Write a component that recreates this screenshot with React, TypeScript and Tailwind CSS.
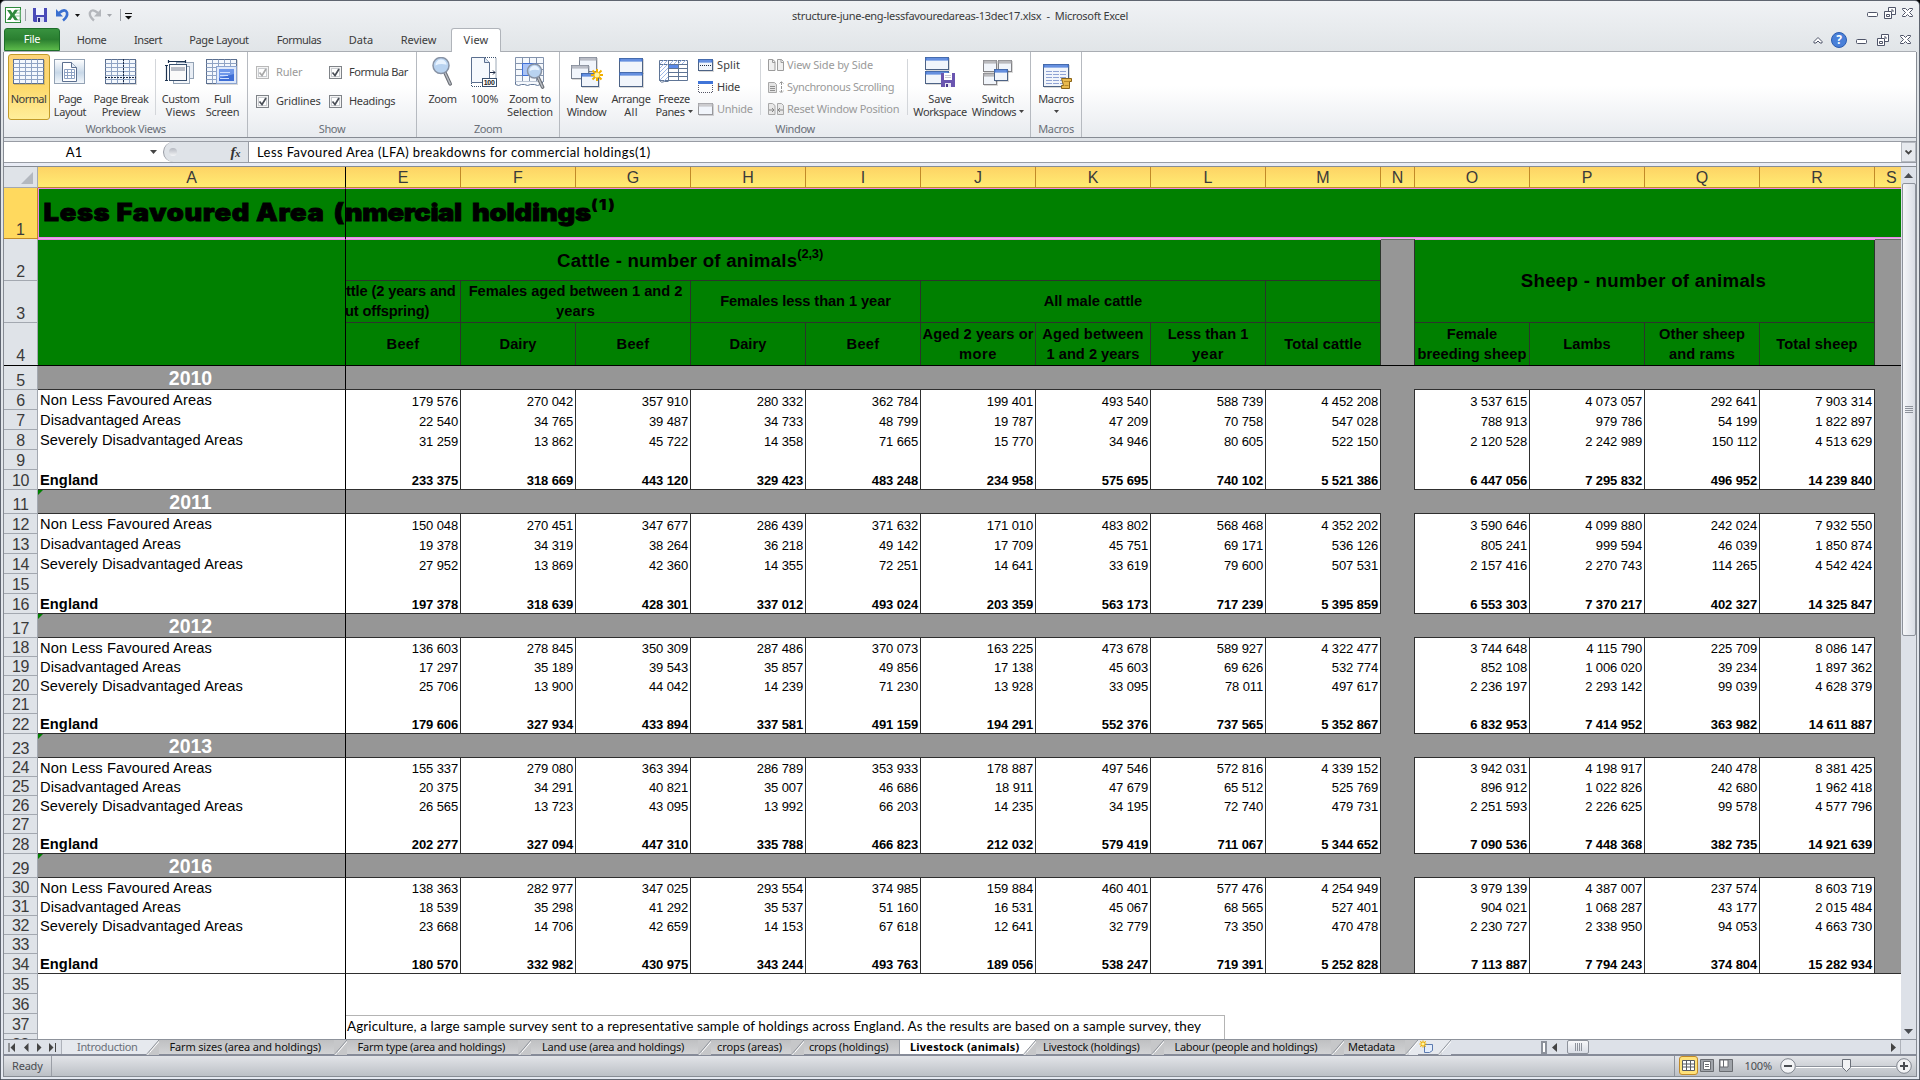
import React, { useLayoutEffect, useRef, useState } from "react";

/* Text tracked so that it fills a given width. */
function Fit({ w, children, className = "" }: { w: number; children: string; className?: string }) {
  const ref = useRef<HTMLSpanElement>(null);
  const [ls, setLs] = useState(0);
  useLayoutEffect(() => {
    if (ref.current) {
      const natural = ref.current.offsetWidth;
      setLs((w + 1 - natural) / children.length);
    }
  }, []);
  return (
    <span ref={ref} className={`inline-block whitespace-pre ${className}`} style={{ letterSpacing: `${ls}px` }}>
      {children}
    </span>
  );
}

/* ---------- icons ---------- */
type K = { children: React.ReactNode; w?: number; h?: number; className?: string };
const Svg = ({ children, w = 32, h = 32, className = "" }: K) => (
  <svg width={w} height={h} viewBox={`0 0 ${w} ${h}`} className={`block shrink-0 ${className}`}>
    {children}
  </svg>
);

const Sheet = ({ x = 0.5, y = 2.5, w = 30, h = 24 }: { x?: number; y?: number; w?: number; h?: number }) => (
  <g>
    <rect x={x + 1} y={y + 1} width={w} height={h} fill="none" stroke="#000" strokeOpacity=".15" />
    <rect x={x} y={y} width={w} height={h} fill="#f4f8fd" stroke="#5b6f8f" />
    {[4, 8, 12, 16, 20].map((d) => (
      <path key={d} d={`M${x} ${y + d}h${w}`} stroke="#8fa3c4" />
    ))}
    {[6, 12, 18, 24].map((d) => (
      <path key={d} d={`M${x + d} ${y}v${h}`} stroke="#8fa3c4" />
    ))}
  </g>
);

const IconNormal = () => <Svg><Sheet /></Svg>;
const IconPageLayout = () => (
  <Svg>
    <defs>
      <linearGradient id="pl" x1="0" y1="0" x2="0" y2="1">
        <stop offset="0" stopColor="#fff" /><stop offset=".55" stopColor="#c8d8e8" /><stop offset="1" stopColor="#f4f8fc" />
      </linearGradient>
    </defs>
    <rect x=".5" y="2.5" width="30" height="24" fill="url(#pl)" stroke="#93a2b4" />
    <path d="M8.500 5.500h9l5 5v14h-14z" fill="#fff" stroke="#5b6f8f" />
    <path d="M17.500 5.500v5h5" fill="#e4ecf5" stroke="#5b6f8f" />
    <path d="M10.500 12.500h10v9h-10zM10.500 15.500h10M10.500 18.500h10M13.500 12.500v9M17.500 12.500v9" fill="none" stroke="#8fa3c4" />
  </Svg>
);
const IconPageBreak = () => (
  <Svg>
    <Sheet />
    <path d="M18.500 2v25M0 20.500h31" stroke="#1d2b45" strokeDasharray="2 1" />
  </Svg>
);
const IconCustom = () => (
  <Svg>
    <rect x="12.500" y="5.500" width="17" height="16" fill="#e9eef5" stroke="#93a2b4" />
    <rect x="9.500" y="9.500" width="16" height="17" fill="#f4f7fb" stroke="#93a2b4" />
    <rect x="5.500" y="7.500" width="17" height="16" fill="#fafafa" stroke="#39506e" />
    <path d="M7 10h14v4H7z" fill="#b9bdc6" />
    <path d="M4.500 4.500h17M4.500 3v3M21.500 3v3M2.500 8.500v15M1 8.500h3M1 23.500h3" stroke="#1d3350" strokeWidth="1.200" fill="none" />
  </Svg>
);
const IconFull = () => (
  <Svg>
    <Sheet />
    <rect x="10.500" y="9.500" width="20" height="17" fill="#dfe9fa" stroke="#8aa3d0" />
    <rect x="13" y="12" width="15" height="12" fill="#3f6fd6" />
    <path d="M13 12h15v5l-15 4z" fill="#6f98ea" />
    <path d="M14 15.500h10M14 18.500h8M14 21.500h9" stroke="#cfe0ff" />
  </Svg>
);
const Lens = ({ x, y, r }: { x: number; y: number; r: number }) => (
  <g>
    <path d={`M${x + r * 0.5} ${y + r * 0.9}l${r * 0.65} ${r * 1.4}`} stroke="#6b6f76" strokeWidth="3.600" strokeLinecap="round" />
    <path d={`M${x + r * 0.5} ${y + r * 0.9}l${r * 0.65} ${r * 1.4}`} stroke="#b9bdc4" strokeWidth="1.400" strokeLinecap="round" />
    <circle cx={x} cy={y} r={r} fill="#b9d3f0" stroke="#8893a5" strokeWidth="1.500" />
    <path d={`M${x - r * 0.7} ${y}a${r * 0.7} ${r * 0.7} 0 0 1 ${r * 1.4} ${-r * 0.1}q${-r * 0.8} ${-r * 0.2} ${-r * 1.4} ${r * 0.1}`} fill="#e8f3ff" />
  </g>
);
const IconZoom = () => <Svg><Lens x={15} y={8.500} r={8} /></Svg>;
const Icon100 = () => (
  <Svg>
    <path d="M3.500 .5h13l5 5v20h-18z" fill="#f6f9fd" stroke="#5b6f8f" />
    <path d="M16.500 .5v5h5" fill="#dfe8f4" stroke="#5b6f8f" />
    <path d="M17 .5h11v21M3.500 26v3.500h11" fill="none" stroke="#39506e" strokeDasharray="1 1" />
    <path d="M22 15.500h5M25 13.500l2 2l-2 2" stroke="#1d2b45" fill="none" />
    <rect x="14.500" y="21.500" width="14" height="8" fill="#fff" stroke="#39506e" />
    <text x="15.800" y="28.300" fontSize="7" fontWeight="700" fontFamily="Liberation Sans" fill="#222" textLength="11">100</text>
  </Svg>
);
const IconZoomSel = () => (
  <Svg>
    <path d="M1.500 .5h28v24h-28zM1.500 6.500h28M1.500 12.500h28M1.500 18.500h28M8.500 .5v24M15.500 .5v24M22.500 .5v24" fill="#f6f9fd" stroke="#8393ad" />
    <path d="M1.500 24.500v3q3 2 6 0h3q3 2 6 0h4q3 2 6 0l3-3" fill="#f6f9fd" stroke="#5f7596" />
    <path d="M8.500 6.500h14v12h-14z" fill="#a9c3f5" stroke="#3f6fd6" />
    <Lens x={20.500} y={14} r={7} />
  </Svg>
);
const Win = ({ x, y, w, h, c = "#3f74d8", s = "#4c6285" }: { x: number; y: number; w: number; h: number; c?: string; s?: string }) => (
  <g>
    <rect x={x + 1} y={y + 1} width={w} height={h} fill="none" stroke="#000" strokeOpacity=".15" />
    <rect x={x} y={y} width={w} height={h} fill="#f1f5fb" stroke={s} />
    <rect x={x} y={y} width={w} height={3} fill={c} />
    <path d={`M${x + 1} ${y + 1.5}h${w - 2}`} stroke="#fff" strokeOpacity=".4" />
  </g>
);
const Star = ({ x, y, k = 1 }: { x: number; y: number; k?: number }) => (
  <g transform={`translate(${x} ${y}) scale(${k})`}>
    <path d="M0-6V6M-6 0H6M-4.500-4.500l9 9M4.500-4.500l-9 9" stroke="#f0b000" strokeWidth="2" />
    <circle r="2.500" fill="#fff3a0" />
  </g>
);
const IconNewWin = () => (
  <Svg>
    <Win x={8.500} y={0.500} w={17} h={14} c="#a9adb8" s="#7a8290" />
    <Win x={0.500} y={8.500} w={17} h={13} c="#a9adb8" s="#7a8290" />
    <Win x={10.500} y={16.500} w={17} h={13} />
    <Star x={26} y={18} />
  </Svg>
);
const IconArrange = () => (
  <Svg><Win x={4.500} y={1.500} w={23} h={14} /><Win x={4.500} y={15.500} w={23} h={14} /></Svg>
);
const IconFreeze = () => (
  <Svg>
    <path d="M1.500 3.500h28v20h-28zM1.500 7.500h28M10.500 11.500h19M10.500 15.500h19M10.500 19.500h19M10.500 3.500v20M20.500 3.500v20" fill="#fff" stroke="#5f7596" />
    <path d="M11 8h9v3h-9z" fill="#5b8bea" />
    <path d="M2 7l4-4M2 11l8-8M2 15l8-8M2 19l8-8M2 23l8-8M6 24l4-4M12 7l4-4M16 7l4-4M20 7l4-4M24 7l4-4" stroke="#9fb9e8" />
    <path d="M1.500 23.500q2 3 5 1h4" fill="none" stroke="#5f7596" />
  </Svg>
);
const IconSplit = () => (
  <Svg w={16} h={14}><Win x={0.500} y={1.500} w={14} h={11} /><path d="M2 7.500h12" stroke="#1d2b45" strokeDasharray="1 1" /></Svg>
);
const IconHide = () => (
  <Svg w={16} h={14}><rect x="0" y="1" width="15" height="3" fill="#3f74d8" /><path d="M.5 5v7.500h14V5" fill="none" stroke="#556" strokeDasharray="1 1" /></Svg>
);
const IconUnhide = () => <Svg w={16} h={14}><Win x={0.500} y={1.500} w={14} h={11} c="#c0c0c4" s="#98989c" /></Svg>;
const IconSide = () => (
  <Svg w={16} h={14}>
    <path d="M.5 1.500h4l2.500 2v9H.5zM9.500 1.500h4l2 2v9h-6z" fill="#f0f0f0" stroke="#9c9c9c" />
    <path d="M4.500 1.500v3h2.500M13 1.500v3h2.500" fill="none" stroke="#9c9c9c" />
  </Svg>
);
const IconSync = () => (
  <Svg w={16} h={14}>
    <path d="M.5 2.500h6l2 2v8h-8z" fill="#e4e4e4" stroke="#a8a8a8" />
    <path d="M2 6.500h5M2 8.500h5M2 10.500h5" stroke="#8e8e8e" />
    <path d="M13.500 2v10M11.500 3.500l2-2l2 2M11.500 11l2 2l2-2" stroke="#969696" fill="none" strokeDasharray="3 1" />
  </Svg>
);
const IconReset = () => (
  <Svg w={16} h={14}>
    <path d="M.5 1.500h4l2.500 2v9H.5zM9.500 1.500h4l2 2v9h-6z" fill="#e8e8e8" stroke="#a8a8a8" />
    <path d="M1 8h5M4 6l2 2l-2 2M15 8h-5M12 6l-2 2l2 2" stroke="#858585" fill="none" />
  </Svg>
);
const IconSaveWs = () => (
  <Svg>
    <Win x={1.500} y={0.500} w={23} h={12} />
    <Win x={1.500} y={14.500} w={23} h={12} />
    <path d="M17 16h14v14H17z" fill="#6a55b0" />
    <path d="M20 16h8v7h-8z" fill="#fff" /><path d="M21 18.500h6M21 20.500h6" stroke="#c9c9d4" />
    <path d="M21 26h6v4h-6z" fill="#e9e6f5" /><path d="M22 27h2v3h-2z" fill="#4b3a8c" />
  </Svg>
);
const IconSwitch = () => (
  <Svg>
    <Win x={1.500} y={3.500} w={13} h={11} c="#a9a9ad" s="#828286" />
    <Win x={16.500} y={3.500} w={13} h={11} c="#a9a9ad" s="#828286" />
    <Win x={1.500} y={16.500} w={13} h={11} c="#a9a9ad" s="#828286" />
    <Win x={12.500} y={12.500} w={13} h={11} />
  </Svg>
);
const IconMacros = () => (
  <Svg>
    <Win x={3.500} y={7.500} w={25} h={22} />
    {[14, 17, 20, 23, 26].map((y) => (
      <path key={y} d={`M6 ${y}.5h6M13 ${y}.5h6M20 ${y}.5h6`} stroke="#8fa3d4" />
    ))}
    <path d="M21.500 21.500h10v3h-2v7h-8v-3h2z" fill="#e8b94e" stroke="#8a6418" />
    <path d="M24 24.500h5M24.500 28.500h4" stroke="#b98a2c" />
  </Svg>
);
const Tri = ({ className = "", c = "#444" }: { className?: string; c?: string }) => (
  <Svg w={7} h={4} className={className}><path d="M0 0h7L3.500 4z" fill={c} /></Svg>
);

/* ---------- window frame ---------- */
const MinGlyph = () => <Svg w={11} h={12}><rect x=".5" y="5.500" width="10" height="4" rx="1" fill="#fff" stroke="#4f5468" /></Svg>;
const RestoreGlyph = () => (
  <Svg w={12} h={12}>
    <path d="M4.500 .5h7v7h-7z" fill="#fff" stroke="#4f5468" /><path d="M7 3h2v2" fill="none" stroke="#4f5468" />
    <path d="M.5 4.500h7v7h-7z" fill="#fff" stroke="#4f5468" /><path d="M2.500 7.500h3v2h-3z" fill="#fff" stroke="#4f5468" />
  </Svg>
);
const CloseGlyph = () => (
  <Svg w={12} h={12}>
    <path d="M.5 1.500h3l2 2l2-2h3v1l-3 3l3 3v1h-3l-2-2l-2 2h-3v-1l3-3l-3-3z" fill="#fff" stroke="#4f5468" />
  </Svg>
);

function TitleBar() {
  return (
    <div className="flex h-[27px] shrink-0 items-start">
      <div className="flex h-[28px] w-[788px] shrink-0 items-center pl-px">
        <Svg w={17} h={17}>
          <rect x=".5" y=".5" width="15" height="15" fill="#fff" stroke="#2f8a3d" />
          <path d="M10 3h5v10h-5M10 6h5M10 9h5" stroke="#8fc79a" fill="none" />
          <path d="M2 3h3.500l2 3l2-3H13L9.500 8l3.500 5H9.500l-2-3l-2 3H2l3.500-5z" fill="#2f8a3d" />
        </Svg>
        <div className="ml-[3px] h-[12px] w-px bg-[#9a9ea6]" />
        <Svg w={14} h={14} className="ml-[7px]">
          <path d="M0 0h14v14H1l-1-1z" fill="#4a4ab8" /><path d="M3 0h8v7H3z" fill="#f2f4ff" /><path d="M4 9h7v5H4z" fill="#d9dcf4" /><path d="M5 10h2v4H5z" fill="#2d2d80" />
        </Svg>
        <Svg w={14} h={14} className="ml-[9px]">
          <path d="M3 5q6-5 8-.5q1 4-4 8" fill="none" stroke="#3a6fd0" strokeWidth="2.600" /><path d="M0 1v7.500h7z" fill="#3a6fd0" />
        </Svg>
        <Svg w={5} h={3} className="ml-[5px]"><path d="M0 0h5L2.500 3z" fill="#111" /></Svg>
        <Svg w={14} h={14} className="ml-[8px]">
          <path d="M10 5q-6-5-8-.5q-1 4 4 8" fill="none" stroke="#b4b7bc" strokeWidth="2.400" /><path d="M13 1v7.500H6z" fill="#b4b7bc" />
        </Svg>
        <Svg w={5} h={3} className="ml-[5px]"><path d="M0 0h5L2.500 3z" fill="#a4a7ac" /></Svg>
        <div className="ml-[8px] h-[12px] w-px bg-[#9a9ea6]" />
        <Svg w={7} h={7} className="ml-[4px] mt-[2px]"><path d="M0 .5h7" stroke="#111" /><path d="M0 3h7L3.500 6.500z" fill="#111" /></Svg>
      </div>
      <Fit w={334.5} className="mt-[7px] text-[11px] leading-[15px] text-[#3b3b3b]">structure-june-eng-lessfavouredareas-13dec17.xlsx  -  Microsoft Excel</Fit>
      <div className="ml-auto flex gap-[6px] pr-[2px] pt-[6px]">
        <MinGlyph /><RestoreGlyph /><CloseGlyph />
      </div>
    </div>
  );
}

function TabRow() {
  const tabs: [string, number, string][] = [
    ["Home", 28, "w-[57px]"], ["Insert", 27.7, "w-[56px]"], ["Page Layout", 58.7, "w-[86px]"],
    ["Formulas", 43, "w-[74px]"], ["Data", 23, "w-[50px]"], ["Review", 34.7, "w-[65px]"],
  ];
  return (
    <div className="flex h-[24px] shrink-0 items-stretch border-b border-[#a9adb3] text-[11px] text-[#3b3b3b]">
      <div className="mr-[3px] flex w-[56px] items-center justify-center rounded-t-[3px] border border-[#1d6e2a] bg-gradient-to-b from-[#38923f] via-[#2a7f30] to-[#5cbb4a] text-white">
        <Fit w={16}>File</Fit>
      </div>
      {tabs.map(([t, w, cls]) => (
        <div key={t} className={`flex shrink-0 items-center justify-center pt-px ${cls}`}><Fit w={w}>{t}</Fit></div>
      ))}
      <div className="-mb-px flex w-[50px] items-center justify-center rounded-t-[3px] border border-b-0 border-[#b0b4ba] bg-white"><Fit w={23.7}>View</Fit></div>
      <div className="ml-auto flex items-center pr-[4px]">
        <Svg w={10} h={8}><path d="M1 5.500L5 1.500L9 5.500v1.500H7L5 5L3 7H1z" fill="#fff" stroke="#4f5468" /></Svg>
        <div className="ml-[8px] flex size-[16px] items-center justify-center rounded-full border border-[#2c5cb0] bg-[#4a80d8] text-[12px] font-bold leading-none text-white">?</div>
        <div className="ml-[9px]"><MinGlyph /></div>
        <div className="ml-[10px]"><RestoreGlyph /></div>
        <div className="ml-[11px]"><CloseGlyph /></div>
      </div>
    </div>
  );
}

type BtnLine = [string, number];
function Big({ icon, lines, cls, arrow = 0, selected = false, odd = false }: { icon: React.ReactNode; lines: BtnLine[]; cls: string; arrow?: number; selected?: boolean; odd?: boolean }) {
  return (
    <div className={`flex shrink-0 flex-col items-center leading-[13px] ${cls} ${selected ? "mt-[2px] h-[66px] rounded-[3px] border border-[#c29b29] bg-gradient-to-b from-[#fbd37a] via-[#fdd96b] to-[#ffee9a] pr-px pt-[2px]" : "h-[70px] pt-[5px]"}`}>
      <div className={`h-[35px] ${odd ? "mr-px" : ""}`}>{icon}</div>
      {lines.map(([t, w], i) => (
        <div key={t} className="flex h-[13px] items-center">
          <Fit w={w}>{t}</Fit>
          {arrow === i + 1 && <Svg w={5} h={3} className="ml-[3px]"><path d="M0 0h5L2.500 3z" fill="#444" /></Svg>}
        </div>
      ))}
      {arrow === 9 && <Svg w={5} h={3} className="mt-[5px]"><path d="M0 0h5L2.500 3z" fill="#444" /></Svg>}
    </div>
  );
}

function Group({ children, label, lw, cls }: { children: React.ReactNode; label: string; lw: number; cls: string }) {
  return (
    <div className={`flex h-[85px] shrink-0 flex-col border-r border-[#b6bac0] ${cls}`}>
      <div className="flex h-[70px]">{children}</div>
      <div className="flex justify-center leading-[13px] text-[#6a6f78]"><Fit w={lw}>{label}</Fit></div>
    </div>
  );
}
const Sep = ({ cls = "" }: { cls?: string }) => <div className={`mt-[7px] h-[56px] w-px shrink-0 bg-[#d3d6da] ${cls}`} />;

function Check({ label, w, off = false }: { label: string; w: number; off?: boolean }) {
  return (
    <div className="flex h-[13px] items-center">
      <Svg w={13} h={13}>
        <rect x=".5" y=".5" width="12" height="12" fill="#f4f4f4" stroke={off ? "#b8b8b8" : "#7f8388"} />
        <rect x="2.500" y="2.500" width="8" height="8" fill="#fff" stroke="#c9ccd0" />
        <path d="M3.500 6.500l2.500 3l4-6.500" fill="none" stroke={off ? "#a9a9a9" : "#4a4f57"} strokeWidth="1.700" />
      </Svg>
      <Fit w={w} className={`ml-[7px] ${off ? "text-[#9a9a9a]" : ""}`}>{label}</Fit>
    </div>
  );
}
function Small({ icon, label, w, off = false }: { icon: React.ReactNode; label: string; w: number; off?: boolean }) {
  return (
    <div className={`flex h-[22px] items-center ${off ? "text-[#9a9a9a]" : ""}`}>{icon}<Fit w={w} className="ml-[3px]">{label}</Fit></div>
  );
}

function Ribbon() {
  return (
    <div className="flex h-[86px] shrink-0 border-b border-[#868b93] bg-gradient-to-b from-white via-white via-40% to-[#e8ebef] text-[11px] text-[#3b3b3b]">
      <Group label="Workbook Views" lw={79} cls="w-[244px]">
        <Big cls="ml-[4px] w-[42px]" selected icon={<IconNormal />} lines={[["Normal", 34.7]]} />
        <Big cls="w-[40px]" icon={<IconPageLayout />} lines={[["Page", 22.5], ["Layout", 31.3]]} />
        <Big cls="w-[62px]" icon={<IconPageBreak />} lines={[["Page Break", 53.7], ["Preview", 37.7]]} />
        <Sep cls="mx-[3px]" />
        <Big cls="w-[43px]" odd icon={<IconCustom />} lines={[["Custom", 36.7], ["Views", 28]]} />
        <Big cls="w-[41px]" odd icon={<IconFull />} lines={[["Full", 16], ["Screen", 32.7]]} />
      </Group>
      <Group label="Show" lw={25.7} cls="w-[169px]">
        <div className="flex w-[73px] flex-col gap-[16px] pl-[8px] pt-[14px]"><Check label="Ruler" w={25.3} off /><Check label="Gridlines" w={43.5} /></div>
        <div className="flex flex-col gap-[16px] pl-[8px] pt-[14px]"><Check label="Formula Bar" w={58} /><Check label="Headings" w={45.3} /></div>
      </Group>
      <Group label="Zoom" lw={27} cls="w-[143px]">
        <Big cls="ml-[5px] w-[41px]" odd icon={<IconZoom />} lines={[["Zoom", 27]]} />
        <Big cls="w-[43px]" odd icon={<Icon100 />} lines={[["100%", 26.7]]} />
        <Big cls="w-[48px]" icon={<IconZoomSel />} lines={[["Zoom to", 40.3], ["Selection", 45]]} />
      </Group>
      <Group label="Window" lw={38.7} cls="w-[471px]">
        <Big cls="ml-[3px] w-[47px]" icon={<div className="ml-px"><IconNewWin /></div>} lines={[["New", 21.7], ["Window", 39]]} />
        <Big cls="w-[42px]" icon={<IconArrange />} lines={[["Arrange", 38.3], ["All", 13]]} />
        <Big cls="w-[44px]" arrow={2} icon={<div className="mr-px"><IconFreeze /></div>} lines={[["Freeze", 31], ["Panes", 28]]} />
        <div className="flex w-[64px] flex-col pl-[2px] pt-[2px]">
          <Small icon={<IconSplit />} label="Split" w={21.5} /><Small icon={<IconHide />} label="Hide" w={22} /><Small icon={<IconUnhide />} label="Unhide" w={34.3} off />
        </div>
        <Sep />
        <div className="flex w-[146px] flex-col pl-[7px] pt-[2px]">
          <Small icon={<IconSide />} label="View Side by Side" w={85.500} off /><Small icon={<IconSync />} label="Synchronous Scrolling" w={106} off /><Small icon={<IconReset />} label="Reset Window Position" w={111.700} off />
        </div>
        <Sep />
        <Big cls="ml-[3px] w-[58px]" icon={<IconSaveWs />} lines={[["Save", 22.3], ["Workspace", 52.7]]} />
        <Big cls="w-[58px]" arrow={2} icon={<IconSwitch />} lines={[["Switch", 32], ["Windows", 43.3]]} />
      </Group>
      <Group label="Macros" lw={35} cls="w-[51px]">
        <Big cls="w-[50px]" arrow={9} icon={<IconMacros />} lines={[["Macros", 35]]} />
      </Group>
    </div>
  );
}

function FormulaBar() {
  return (
    <div className="flex h-[29px] shrink-0 flex-col bg-[#dfe3e8] pt-[3px] font-[Lato,Calibri,sans-serif]">
      <div className="flex h-[22px] border-y border-[#989ca4] bg-white">
        <div className="flex w-[159px] items-center text-[13px] text-black">
          <div className="flex w-[140px] justify-center pt-px"><Fit w={15}>A1</Fit></div>
          <Tri className="ml-[6px]" />
        </div>
        <div className="flex w-[85px] items-center justify-between rounded-l-[10px] border-l border-[#989ca4] bg-[#dfe3e8] pl-[5px] pr-[8px]">
          <div className="size-[8px] rounded-full bg-gradient-to-b from-[#b4b8c0] to-[#f4f5f7]" />
          <span className="font-['Liberation_Serif',serif] text-[15px] font-bold italic leading-none tracking-[-0.5px] text-[#333]">f<span className="text-[11px]">x</span></span>
        </div>
        <div className="flex flex-1 items-center border-l border-[#989ca4] pl-[8px] pt-px text-[13px] text-black">
          <Fit w={393}>Less Favoured Area (LFA) breakdowns for commercial holdings(1)</Fit>
        </div>
        <div className="flex w-[15px] items-center justify-center border border-[#b5b9c0] bg-[#e6e9ee]"><Svg w={7} h={5}><path d="M.5 .5l3 3l3-3" fill="none" stroke="#444" strokeWidth="1.800" /></Svg></div>
      </div>
      <div className="flex h-[4px] border-b border-[#868b93] bg-[#e9ecf5]" />
    </div>
  );
}

/* ---------- sheet ---------- */
const YEARS: { year: string; first: number; short: boolean; rows: string[][] }[] = [
  { year: "2010", first: 5, short: false, rows: [
    ["179 576","270 042","357 910","280 332","362 784","199 401","493 540","588 739","4 452 208","3 537 615","4 073 057","292 641","7 903 314"],
    ["22 540","34 765","39 487","34 733","48 799","19 787","47 209","70 758","547 028","788 913","979 786","54 199","1 822 897"],
    ["31 259","13 862","45 722","14 358","71 665","15 770","34 946","80 605","522 150","2 120 528","2 242 989","150 112","4 513 629"],
    ["233 375","318 669","443 120","329 423","483 248","234 958","575 695","740 102","5 521 386","6 447 056","7 295 832","496 952","14 239 840"]] },
  { year: "2011", first: 11, short: false, rows: [
    ["150 048","270 451","347 677","286 439","371 632","171 010","483 802","568 468","4 352 202","3 590 646","4 099 880","242 024","7 932 550"],
    ["19 378","34 319","38 264","36 218","49 142","17 709","45 751","69 171","536 126","805 241","999 594","46 039","1 850 874"],
    ["27 952","13 869","42 360","14 355","72 251","14 641","33 619","79 600","507 531","2 157 416","2 270 743","114 265","4 542 424"],
    ["197 378","318 639","428 301","337 012","493 024","203 359","563 173","717 239","5 395 859","6 553 303","7 370 217","402 327","14 325 847"]] },
  { year: "2012", first: 17, short: true, rows: [
    ["136 603","278 845","350 309","287 486","370 073","163 225","473 678","589 927","4 322 477","3 744 648","4 115 790","225 709","8 086 147"],
    ["17 297","35 189","39 543","35 857","49 856","17 138","45 603","69 626","532 774","852 108","1 006 020","39 234","1 897 362"],
    ["25 706","13 900","44 042","14 239","71 230","13 928","33 095","78 011","497 617","2 236 197","2 293 142","99 039","4 628 379"],
    ["179 606","327 934","433 894","337 581","491 159","194 291","552 376","737 565","5 352 867","6 832 953","7 414 952","363 982","14 611 887"]] },
  { year: "2013", first: 23, short: true, rows: [
    ["155 337","279 080","363 394","286 789","353 933","178 887","497 546","572 816","4 339 152","3 942 031","4 198 917","240 478","8 381 425"],
    ["20 375","34 291","40 821","35 007","46 686","18 911","47 679","65 512","525 769","896 912","1 022 826","42 680","1 962 418"],
    ["26 565","13 723","43 095","13 992","66 203","14 235","34 195","72 740","479 731","2 251 593","2 226 625","99 578","4 577 796"],
    ["202 277","327 094","447 310","335 788","466 823","212 032","579 419","711 067","5 344 652","7 090 536","7 448 368","382 735","14 921 639"]] },
  { year: "2016", first: 29, short: true, rows: [
    ["138 363","282 977","347 025","293 554","374 985","159 884","460 401","577 476","4 254 949","3 979 139","4 387 007","237 574","8 603 719"],
    ["18 539","35 298","41 292","35 537","51 160","16 531","45 067","68 565","527 401","904 021","1 068 287","43 177","2 015 484"],
    ["23 668","14 706","42 659","14 153","67 618","12 641","32 779","73 350","470 478","2 230 727","2 338 950","94 053","4 663 730"],
    ["180 570","332 982","430 975","343 244","493 763","189 056","538 247","719 391","5 252 828","7 113 887","7 794 243","374 804","15 282 934"]] },
];
const LABELS: [string, number][] = [["Non Less Favoured Areas", 170.5], ["Disadvantaged Areas", 139.5], ["Severely Disadvantaged Areas", 201.5], ["England", 57.5]];

const RowNo = ({ n, cls = "" }: { n: number; cls?: string }) => (
  <div className={`flex w-[34px] shrink-0 items-end justify-center border-b border-r border-[#a3a8b0] bg-[#dfe3e8] text-[16px] leading-[17px] tracking-[-0.3px] text-[#3a3a3a] ${cls}`}>{n}</div>
);

function DataRow({ n, h, label, vals, bold = false, last = false, end = false }: { n: number; h: string; label?: [string, number]; vals?: string[]; bold?: boolean; last?: boolean; end?: boolean }) {
  const line = last ? "border-b border-b-[#2f2f2f]" : "";
  const cell = (i: number) => (
    <div key={i} className={`flex w-[115px] items-end justify-end border-r border-r-[#2f2f2f] bg-white pr-[2px] text-[13px] leading-[17px] tracking-[-0.12px] ${line}`}>
      {vals ? vals[i] : ""}
    </div>
  );
  const gap = end ? "border-b border-b-[#2f2f2f]" : "";
  return (
    <div className={`flex shrink-0 ${h} ${bold ? "font-bold" : ""}`}>
      <RowNo n={n} cls="font-normal" />
      <div className={`w-[308px] border-r border-r-black bg-white pl-[2px] text-[14.67px] leading-[20px] ${line}`}>
        {label && <Fit w={label[1]}>{label[0]}</Fit>}
      </div>
      {[0, 1, 2, 3, 4, 5, 6, 7, 8].map((i) => cell(i))}
      <div className={`w-[34px] border-r border-r-[#2f2f2f] bg-[#969696] ${gap}`} />
      {[9, 10, 11, 12].map((i) => cell(i))}
      <div className={`w-[26px] bg-[#969696] ${gap}`} />
    </div>
  );
}

function YearBlock({ b }: { b: (typeof YEARS)[number] }) {
  const h = b.short ? "h-[19px]" : "h-[20px]";
  return (
    <>
      <div className="flex h-[24px] shrink-0 bg-[#969696]">
        <RowNo n={b.first} />
        <div className="relative flex w-[308px] items-end justify-center border-b border-r border-b-[#2f2f2f] border-r-black pr-[2px] text-[19.5px] font-bold leading-[21px] text-white">
          {b.first > 5 && <Svg w={5} h={5} className="absolute left-0 top-0"><path d="M0 0h5L0 5z" fill="#008000" /></Svg>}
          {b.year}
        </div>
        <div className="w-[1035px] border-b border-[#2f2f2f]" />
        <div className="ml-[33px] w-[461px] border-b border-[#2f2f2f]" />
      </div>
      {[0, 1, 2].map((i) => <DataRow key={i} n={b.first + 1 + i} h={h} label={LABELS[i]} vals={b.rows[i]} />)}
      <DataRow n={b.first + 4} h={h} />
      <DataRow n={b.first + 5} h="h-[20px]" label={LABELS[3]} vals={b.rows[3]} bold last end={b.first === 29} />
    </>
  );
}

const Head = ({ lines, cls = "" }: { lines: [string, number][]; cls?: string }) => (
  <div className={`flex shrink-0 flex-col items-center justify-center border-r border-[#2b352b] ${cls}`}>
    {lines.map(([t, w]) => <Fit key={t} w={w}>{t}</Fit>)}
  </div>
);

function HeaderBand() {
  return (
    <div className="flex h-[127px] shrink-0 border-b border-black bg-[#008000] text-[14.67px] font-bold leading-[20px] text-black">
      <div className="flex flex-col font-normal">
        <RowNo n={2} cls="h-[42px]" /><RowNo n={3} cls="h-[42px]" /><RowNo n={4} cls="h-[42px] border-b-transparent" />
      </div>
      <div className="w-[308px] border-r border-t border-r-black border-t-[#ee82ee]" />
      <div className="flex w-[1035px] flex-col border-t border-[#ee82ee]">
        <div className="flex h-[41px] items-start border-b border-r border-[#2b352b] pl-[211px] pt-[9px] text-[18.67px] leading-[24px]">
          <Fit w={239}>Cattle - number of animals</Fit>
          <Fit w={25} className="-mt-[7px] text-[13px]">(2,3)</Fit>
        </div>
        <div className="flex h-[42px] border-b border-[#2b352b]">
          <div className="flex w-[115px] flex-col items-start overflow-hidden border-r border-[#2b352b]">
            <Fit w={109}>ttle (2 years and</Fit><Fit w={83} className="-ml-px">ut offspring)</Fit>
          </div>
          <Head cls="w-[230px] pb-px" lines={[["Females aged between 1 and 2", 212.4], ["years", 37.5]]} />
          <Head cls="w-[230px] pb-px" lines={[["Females less than 1 year", 170]]} />
          <Head cls="w-[345px] pb-px" lines={[["All male cattle", 98]]} />
          <Head cls="w-[115px]" lines={[]} />
        </div>
        <div className="flex h-[42px]">
          <Head cls="w-[115px]" lines={[["Beef", 32]]} /><Head cls="w-[115px]" lines={[["Dairy", 36.400]]} />
          <Head cls="w-[115px]" lines={[["Beef", 32]]} /><Head cls="w-[115px]" lines={[["Dairy", 36.400]]} />
          <Head cls="w-[115px]" lines={[["Beef", 32]]} />
          <Head cls="w-[115px]" lines={[["Aged 2 years or", 110], ["more", 37]]} />
          <Head cls="w-[115px]" lines={[["Aged between", 100], ["1 and 2 years", 92]]} />
          <Head cls="w-[115px]" lines={[["Less than 1", 80], ["year", 31]]} />
          <Head cls="w-[115px]" lines={[["Total cattle", 76]]} />
        </div>
      </div>
      <div className="w-[34px] border-r border-t border-[#2f2f2f] border-t-[#6a6a6a] bg-[#969696]" />
      <div className="flex w-[460px] flex-col border-t border-[#ee82ee]">
        <div className="flex h-[83px] items-center justify-center border-b border-r border-[#2b352b] pr-[2px] text-[18.67px]"><Fit w={244}>Sheep - number of animals</Fit></div>
        <div className="flex h-[42px]">
          <Head cls="w-[115px]" lines={[["Female", 50], ["breeding sheep", 107.500]]} /><Head cls="w-[115px]" lines={[["Lambs", 46.400]]} />
          <Head cls="w-[115px]" lines={[["Other sheep", 85.400], ["and rams", 64.700]]} /><Head cls="w-[115px]" lines={[["Total sheep", 80]]} />
        </div>
      </div>
      <div className="w-[26px] border-t border-[#6a6a6a] bg-[#969696]" />
    </div>
  );
}

function Grid() {
  return (
    <div className="flex h-[872px] w-[1897px] shrink-0 flex-col overflow-hidden bg-white font-['Liberation_Sans',Arial,sans-serif] text-black">
      <div className="flex h-[21px] shrink-0 text-[16px] leading-[21px] text-[#3a3a3a]">
        <div className="flex w-[34px] items-end justify-end border-b border-r border-[#a3a8b0] bg-[#dfe3e8] pb-[3px] pr-[4px]"><Svg w={12} h={12}><path d="M12 0v12H0z" fill="#b3b8bf" /></Svg></div>
        <div className="w-[308px] border-b border-r border-b-[#b9872b] border-r-black bg-gradient-to-b from-[#fdd365] to-[#ffec73] text-center">A</div>
        {"EFGHIJKLM".split("").map((c) => <div key={c} className="w-[115px] border-b border-r border-[#c18a28] bg-gradient-to-b from-[#fdd365] to-[#ffec73] text-center">{c}</div>)}
        <div className="w-[34px] border-b border-r border-[#c18a28] bg-gradient-to-b from-[#fdd365] to-[#ffec73] text-center">N</div>
        {"OPQR".split("").map((c) => <div key={c} className="w-[115px] border-b border-r border-[#c18a28] bg-gradient-to-b from-[#fdd365] to-[#ffec73] text-center">{c}</div>)}
        <div className="w-[26px] overflow-hidden border-b border-[#c18a28] bg-gradient-to-b from-[#fdd365] to-[#ffec73] pl-[11px]">S</div>
      </div>
      <div className="flex h-[51px] shrink-0 bg-[#008000] font-[Inter,'Liberation_Sans',sans-serif] text-[24px] font-black leading-[30px]">
        <div className="flex w-[34px] items-end justify-center border-b border-r border-[#c18a28] bg-[#ffd95e] font-['Liberation_Sans',Arial,sans-serif] text-[16px] font-normal leading-[17px] text-[#3a3a3a]">1</div>
        <div className="w-[308px] overflow-hidden border-l border-r border-t border-[#ee82ee] border-r-black [-webkit-text-stroke:0.8px_black]">
          <div className="flex h-[48px] origin-left scale-x-[1.14] pl-[4px] pt-[9px]">
            <Fit w={245}>Less Favoured Area</Fit>
            <Fit w={10} className="ml-[8px]">(</Fit>
          </div>
          <div className="h-[2px] border-t border-[#ee82ee] bg-[#dcbadc]" />
        </div>
        <div className="flex-1 overflow-hidden border-t border-[#ee82ee] [-webkit-text-stroke:0.8px_black]">
          <div className="flex h-[48px] origin-left scale-x-[1.14] pt-[9px]">
            <div className="flex w-[1300px] shrink-0">
              <Fit w={101} className="-ml-px">nmercial</Fit>
              <Fit w={104} className="ml-[9px]">holdings</Fit>
              <Fit w={20} className="-mt-[8px] text-[15px] [-webkit-text-stroke:0px]">(1)</Fit>
            </div>
          </div>
          <div className="h-[2px] border-t border-[#ee82ee] bg-[#dcbadc]" />
        </div>
      </div>
      <HeaderBand />
      {YEARS.map((b) => <YearBlock key={b.year} b={b} />)}
      {[35, 36].map((n) => (
        <div key={n} className="flex h-[20px] shrink-0"><RowNo n={n} /><div className="w-[308px] border-r border-black" /></div>
      ))}
      <div className="flex h-[40px] shrink-0">
        <div className="flex flex-col"><RowNo n={37} cls="h-[20px]" /><RowNo n={38} cls="h-[20px]" /></div>
        <div className="w-[308px] border-r border-black" />
        <div className="mt-px w-[879px] border-r border-t border-[#b4b4b4] pl-px pt-px font-[Lato,Calibri,sans-serif] text-[13.5px] leading-[18px]">
          <Fit w={853.7}>Agriculture, a large sample survey sent to a representative sample of holdings across England. As the results are based on a sample survey, they</Fit>
        </div>
      </div>
    </div>
  );
}

function VScroll() {
  return (
    <div className="flex w-[15px] shrink-0 flex-col items-center bg-[#dde1e8]">
      <div className="flex h-[16px] items-center"><Svg w={9} h={5}><path d="M4.500 0L9 5H0z" fill="#4a4d52" /></Svg></div>
      <div className="flex h-[453px] w-[14px] flex-col items-center justify-center gap-px rounded-[2px] border border-[#8d929b] bg-gradient-to-r from-[#f6f7f9] to-[#d9dde5]">
        {[0, 1, 2, 3].map((i) => <div key={i} className="h-px w-[8px] bg-[#8d929b]" />)}
      </div>
      <div className="flex-1" />
      <div className="flex h-[10px] items-start"><Svg w={9} h={5}><path d="M4.500 5L9 0H0z" fill="#4a4d52" /></Svg></div>
    </div>
  );
}

/* ---------- sheet tabs ---------- */
const Slant = ({ l, r, line = true }: { l: string; r: string; line?: boolean }) => (
  <Svg w={13} h={15}>
    <path d="M0 0h13v15H0z" fill={l} />
    <path d="M13 0v15H0z" fill={r} />
    <path d="M0 15L13 0" stroke="#8f949c" strokeWidth="1" />
    {line && <path d="M1.500 15L13.500 1" stroke="#fff" strokeWidth="1" />}
    <path d="M0 15l3-3v3z" fill="#fff" stroke="#9a9ea6" strokeWidth=".5" />
  </Svg>
);
const G = "#c6c7c9";
function SheetTabs() {
  const tab = (t: string, w: number, cls: string) => (
    <div className={`flex shrink-0 items-center bg-gradient-to-b from-[#bfc0c2] to-[#d2d3d5] ${cls}`}><Fit w={w}>{t}</Fit></div>
  );
  return (
    <div className="flex h-[17px] shrink-0 items-stretch border-b-2 border-t border-b-[#868b98] border-t-[#8d929b] bg-[#dde1e8] text-[11px] leading-[14px] text-[#111]">
      <div className="flex w-[58px] items-center border-r border-[#aeb2ba] pl-[4px]">
        <Svg w={8} h={9}><path d="M1 0v9" stroke="#444" /><path d="M3 0v9M7 0v9L2.500 4.500z" fill="#444" /></Svg>
        <Svg w={5} h={9} className="ml-[8px]"><path d="M4.500 0v9L0 4.500z" fill="#444" /></Svg>
        <Svg w={5} h={9} className="ml-[8px]"><path d="M0 0v9L4.500 4.500z" fill="#444" /></Svg>
        <Svg w={8} h={9} className="ml-[7px]"><path d="M6.500 0v9" stroke="#444" /><path d="M0 0v9L4.500 4.500z" fill="#444" /></Svg>
      </div>
      <div className="flex w-[84px] items-center bg-[#e6e9ee] pl-[15px] text-[#6a6f78]"><Fit w={60}>Introduction</Fit></div>
      <Slant l="#e6e9ee" r={G} />
      {tab("Farm sizes (area and holdings)", 150.6, "w-[175px] pl-[10.5px]")}<Slant l={G} r={G} />
      {tab("Farm type (area and holdings)", 147, "w-[171px] pl-[10.5px]")}<Slant l={G} r={G} />
      {tab("Land use (area and holdings)", 141, "w-[167px] pl-[11px]")}<Slant l={G} r={G} />
      {tab("crops (areas)", 64, "w-[80px] pl-[6px]")}<Slant l={G} r={G} />
      {tab("crops (holdings)", 78, "w-[96px] border-r border-[#9a9ea6] pl-[5px]")}
      <div className="flex w-[123px] items-center bg-white pl-[10px] font-bold text-black"><Fit w={108}>Livestock (animals)</Fit></div>
      <Slant l="#fff" r={G} />
      {tab("Livestock (holdings)", 96, "w-[115px] pl-[7px]")}<Slant l={G} r={G} />
      {tab("Labour (people and holdings)", 142, "w-[167px] pl-[10.5px]")}<Slant l={G} r={G} />
      {tab("Metadata", 45.5, "w-[61px] pl-[4px]")}<Slant l={G} r="#e6e9ee" />
      <div className="flex w-[20px] items-center bg-[#e6e9ee] pl-px">
        <Svg w={15} h={14}><path d="M5.500 4.500h8v6l-3 2h-5z" fill="#e4edfb" stroke="#5b7ab0" /><Star x={4} y={4} k={0.6} /></Svg>
      </div>
      <Slant l="#e6e9ee" r="#dde1e8" />
      <div className="ml-auto flex w-[360px] items-center border-r border-[#aeb2ba]">
        <div className="h-[13px] w-[6px] border-2 border-[#8d929b] bg-white" />
        <Svg w={5} h={9} className="ml-[5px]"><path d="M5 0v9L0 4.500z" fill="#444" /></Svg>
        <div className="ml-[10px] flex h-[14px] w-[22px] items-center justify-center gap-px rounded-[2px] border border-[#8d929b] bg-gradient-to-b from-[#f6f7f9] to-[#d9dde5]">
          {[0, 1, 2, 3].map((i) => <div key={i} className="h-[8px] w-px bg-[#8d929b]" />)}
        </div>
        <Svg w={5} h={9} className="ml-auto mr-[4px]"><path d="M0 0v9L5 4.500z" fill="#444" /></Svg>
      </div>
      <div className="w-[15px]" />
    </div>
  );
}

const Round = ({ plus = false }: { plus?: boolean }) => (
  <Svg w={16} h={16}>
    <circle cx="8" cy="8" r="7.300" fill="#f2f3f5" stroke="#7f848d" />
    <path d={plus ? "M4 8h8M8 4v8" : "M4 8h8"} stroke="#4a4d52" strokeWidth="2" />
  </Svg>
);

function StatusBar() {
  return (
    <div className="flex h-[20px] shrink-0 items-center bg-gradient-to-b from-[#e2e4e8] to-[#bcc0c6] text-[11px] leading-[14px] text-[#4a4d52]">
      <div className="flex h-[20px] w-[48px] items-center border-r border-[#9a9ea6] pb-px pl-[8px]"><Fit w={30}>Ready</Fit></div>
      <div className="ml-auto flex h-[20px] items-center border-l border-[#8d929b] pb-px pl-[4px] pr-[4px]">
        <div className="flex h-[19px] w-[19px] items-center justify-center rounded-[3px] border border-[#c28a28] bg-[#ffe27a]">
          <Svg w={13} h={11}><path d="M.5 .5h12v10H.5zM.5 4h12M.5 7h12M4.500 .5v10M8.500 .5v10" fill="#fff" stroke="#5a5d62" /></Svg>
        </div>
        <Svg w={14} h={13} className="ml-[2px]"><path d="M.5 .5h13v12H.5z" fill="#a0a4aa" stroke="#6a6d72" /><path d="M3.500 2.500h7v8h-7z" fill="#fff" stroke="#6a6d72" /><path d="M5 5.500h4M5 7.500h4" stroke="#6a6d72" /></Svg>
        <Svg w={14} h={13} className="ml-[5px]"><path d="M.5 .5h13v12H.5z" fill="#a0a4aa" stroke="#6a6d72" /><path d="M1 1h8v7H1z" fill="#fff" stroke="#6a6d72" /><path d="M4.500 0v8" stroke="#6a6d72" /></Svg>
        <Fit w={26.5} className="ml-[11px]">100%</Fit>
        <div className="ml-[8px]"><Round /></div>
        <Svg w={100} h={16}>
          <path d="M0 8.500h100" stroke="#8d929b" /><path d="M0 9.500h100" stroke="#fff" />
          <path d="M46.500 1.500h8v8l-4 4l-4-4z" fill="#f2f3f5" stroke="#6a6f78" />
        </Svg>
        <Round plus />
      </div>
    </div>
  );
}

export default function App() {
  return (
    <div className="h-[1080px] w-[1920px] overflow-hidden bg-black font-['Noto_Sans','Segoe_UI',sans-serif]">
      <div className="flex h-[1080px] w-[1920px] flex-col overflow-hidden rounded-t-[5px] border border-[#5f6570] bg-gradient-to-b from-[#f0f2f5] via-[#e0e4e7] via-[5%] to-[#e4e8f0] px-[3px] pb-[1px]">
        <div className="flex h-[1077px] w-[1912px] flex-col">
          <TitleBar />
          <TabRow />
          <div className="-mx-px flex flex-col border-x border-b border-[#868b93]">
            <Ribbon />
            <FormulaBar />
            <div className="flex h-[872px] shrink-0"><Grid /><VScroll /></div>
            <SheetTabs />
            <StatusBar />
          </div>
        </div>
      </div>
    </div>
  );
}
